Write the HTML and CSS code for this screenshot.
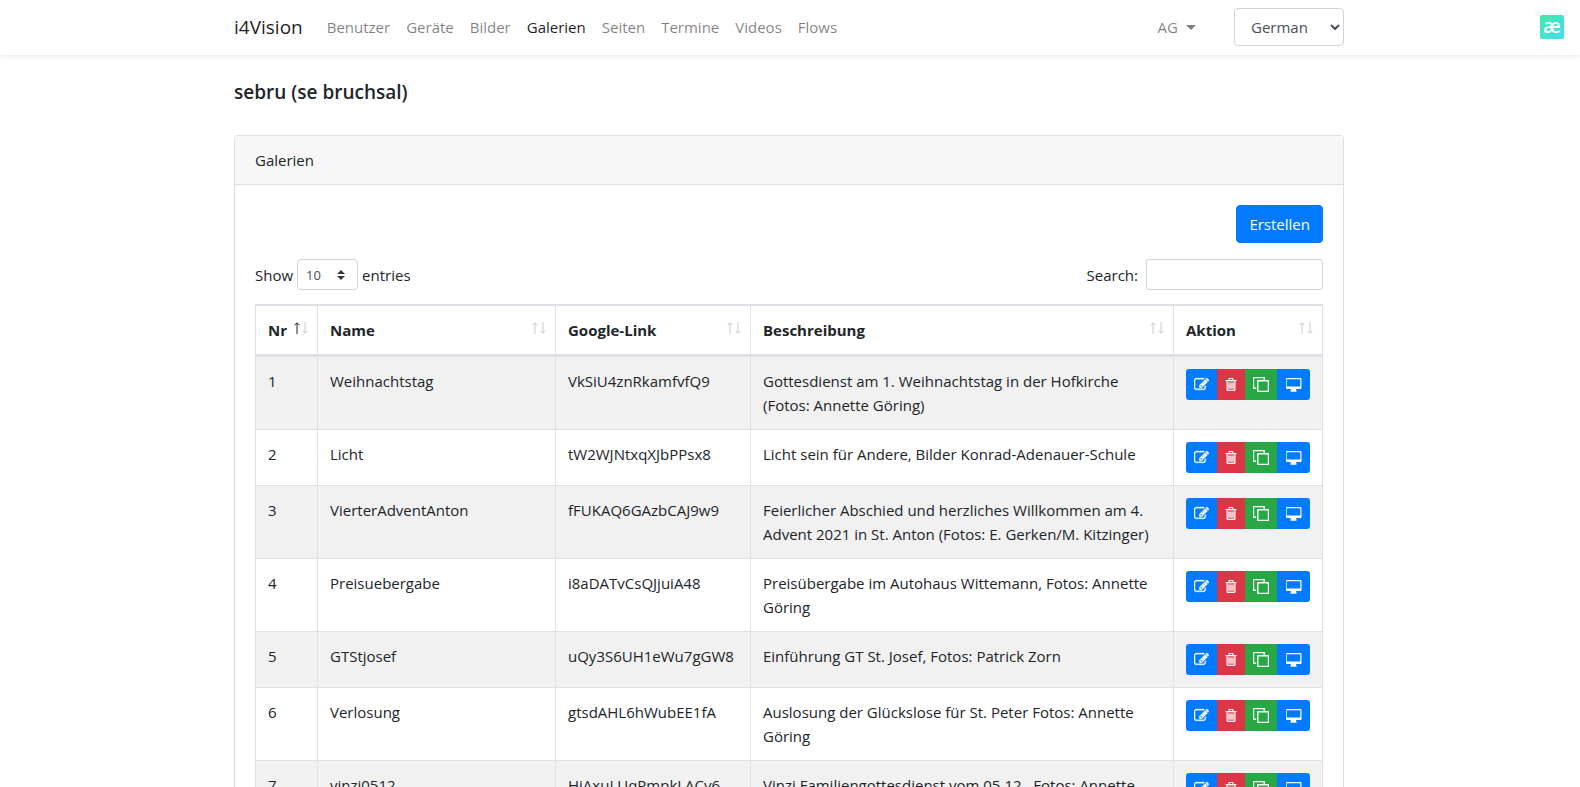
FILE: index.html
```html
<!DOCTYPE html>
<html lang="de">
<head>
<meta charset="utf-8">
<meta name="viewport" content="width=device-width, initial-scale=1">
<title>i4Vision – Galerien</title>
<link rel="stylesheet" href="styles.css">
</head>
<body>
<svg class="sprite" aria-hidden="true">
  <symbol id="edit" viewBox="0 0 1792 1792"><path stroke="currentColor" stroke-width="40" d="M888 1184l116-116-152-152-116 116v56h96v96h56zm440-720q-16-16-33 1l-350 350q-17 17-1 33t33-1l350-350q17-17 1-33zm80 594v190q0 119-84.500 203.500t-203.500 84.500h-832q-119 0-203.500-84.500t-84.500-203.500v-832q0-119 84.500-203.500t203.500-84.500h832q63 0 117 25 15 7 18 23 3 17-9 29l-49 49q-14 14-32 8-23-6-45-6h-832q-66 0-113 47t-47 113v832q0 66 47 113t113 47h832q66 0 113-47t47-113v-126q0-13 9-22l64-64q15-15 35-7t20 29zm-96-738l288 288-672 672h-288v-288zm444 132l-92 92-288-288 92-92q28-28 68-28t68 28l152 152q28 28 28 68t-28 68z"/></symbol>
  <symbol id="trash" viewBox="0 0 11 13"><path d="M1.500 3h8v9.500h-8z" fill-opacity=".35"/><path d="M0 2.500h11M3.500 2.500v-1.500q0-.5.5-.5h3q.5 0 .5.500v1.500M1.500 3v8.500q0 1 1 1h6q1 0 1-1v-8.500M3.500 5v5.500M5.500 5v5.500M7.500 5v5.500" fill="none" stroke="currentColor" stroke-width="1.100"/></symbol>
  <symbol id="clone" viewBox="0 0 15 14"><path d="M4.500 3.500h10v10h-10zM3 10.500h-2.500v-10h10v2.500" fill="none" stroke="currentColor" stroke-width="1.300" stroke-linejoin="round"/></symbol>
  <symbol id="desktop" viewBox="0 0 16 14"><path fill-rule="evenodd" d="M1.200 0h13.600q1.200 0 1.200 1.200v8.600q0 1.200-1.200 1.200h-4.300q0 .9.500 1.500v.8q0 .5-.5.500h-5q-.5 0-.5-.5v-.8q.5-.6.500-1.500h-3.800q-1.200 0-1.200-1.200v-8.600q0-1.200 1.200-1.200zM1.200 1.200v7.300h13.600v-7.300z"/></symbol>
  <symbol id="up" viewBox="0 0 6 12"><path d="M3 12v-11M.5 3.300l2.500-2.500 2.500 2.500" fill="none" stroke="currentColor"/></symbol>
  <symbol id="down" viewBox="0 0 6 12"><path d="M3 0v11M.5 8.700l2.500 2.500 2.500-2.500" fill="none" stroke="currentColor"/></symbol>
</svg>

<header class="navbar">
  <nav class="container navbar-inner">
    <a class="brand" href="#">i4Vision</a>
    <ul class="nav">
      <li><a href="#">Benutzer</a></li>
      <li><a href="#">Geräte</a></li>
      <li><a href="#">Bilder</a></li>
      <li><a class="active" href="#">Galerien</a></li>
      <li><a href="#">Seiten</a></li>
      <li><a href="#">Termine</a></li>
      <li><a href="#">Videos</a></li>
      <li><a href="#">Flows</a></li>
    </ul>
    <button class="dropdown" type="button">AG<span class="caret"></span></button>
    <select class="language" aria-label="Sprache"><option>German</option><option>English</option></select>
  </nav>
  <a class="badge" href="#" aria-label="ae">æ</a>
</header>

<main class="container">
  <h1 class="title">sebru (se bruchsal)</h1>
  <section class="card">
    <div class="card-header">Galerien</div>
    <div class="card-body">
      <div class="actions"><button class="create" type="button">Erstellen</button></div>
      <div class="filters">
        <label class="length" for="length">Show
          <span class="length-box">
            <select id="length"><option>10</option><option>25</option><option>50</option></select>
            <svg class="length-icon" viewBox="0 0 8 10" aria-hidden="true"><path d="M0 4l4-4 4 4zM0 6l4 4 4-4z"/></svg>
          </span>
          entries</label>
        <label class="search" for="search">Search:<input id="search" type="search"></label>
      </div>
      <table class="table">
        <colgroup><col class="col-nr"><col class="col-name"><col class="col-link"><col><col class="col-action"></colgroup>
        <thead>
          <tr>
            <th><div class="sort">Nr<span class="arrows asc"><svg><use href="#up"/></svg><svg><use href="#down"/></svg></span></div></th>
            <th><div class="sort">Name<span class="arrows"><svg><use href="#up"/></svg><svg><use href="#down"/></svg></span></div></th>
            <th><div class="sort">Google-Link<span class="arrows"><svg><use href="#up"/></svg><svg><use href="#down"/></svg></span></div></th>
            <th><div class="sort">Beschreibung<span class="arrows"><svg><use href="#up"/></svg><svg><use href="#down"/></svg></span></div></th>
            <th><div class="sort">Aktion<span class="arrows"><svg><use href="#up"/></svg><svg><use href="#down"/></svg></span></div></th>
          </tr>
        </thead>
        <tbody id="rows"></tbody>
      </table>
    </div>
  </section>
</main>
<script src="rows.js"></script>
</body>
</html>
```
FILE: rows.js
```js
const galleries = [
  ["Weihnachtstag", "VkSiU4znRkamfvfQ9", "Gottesdienst am 1. Weihnachtstag in der Hofkirche (Fotos: Annette Göring)"],
  ["Licht", "tW2WJNtxqXJbPPsx8", "Licht sein für Andere, Bilder Konrad-Adenauer-Schule"],
  ["VierterAdventAnton", "fFUKAQ6GAzbCAJ9w9", "Feierlicher Abschied und herzliches Willkommen am 4. Advent 2021 in St. Anton (Fotos: E. Gerken/M. Kitzinger)"],
  ["Preisuebergabe", "i8aDATvCsQJjuiA48", "Preisübergabe im Autohaus Wittemann, Fotos: Annette Göring"],
  ["GTStjosef", "uQy3S6UH1eWu7gGW8", "Einführung GT St. Josef, Fotos: Patrick Zorn"],
  ["Verlosung", "gtsdAHL6hWubEE1fA", "Auslosung der Glückslose für St. Peter Fotos: Annette Göring"],
  ["vinzi0512", "HjAxuLUqPmpkLACv6", "Vinzi Familiengottesdienst vom 05.12., Fotos: Annette Göring"]
];

const actions = [
  ["edit", "Bearbeiten"],
  ["trash", "Löschen"],
  ["clone", "Kopieren"],
  ["desktop", "Anzeigen"]
];

const buttons = actions
  .map(([icon, label]) => `<button type="button" class="btn btn-${icon}" aria-label="${label}"><svg><use href="#${icon}"/></svg></button>`)
  .join("");

document.getElementById("rows").innerHTML = galleries
  .map(([name, link, text], i) => `<tr><td>${i + 1}</td><td>${name}</td><td>${link}</td><td>${text}</td><td><div class="btn-group">${buttons}</div></td></tr>`)
  .join("");
```
FILE: styles.css
```css
*, *::before, *::after { box-sizing: border-box; }

body {
  margin: 0;
  font: 15px/24px "Open Sans", "Noto Sans", sans-serif;
  color: #212529;
  background: #fff;
}

button, select, input { font: inherit; }
a { text-decoration: none; color: inherit; }
.sprite { position: absolute; width: 0; height: 0; }

.container {
  width: 100%;
  max-width: 1140px;
  margin: 0 auto;
  padding: 0 16px 0 14px;
}

.navbar {
  position: relative;
  padding-bottom: 1px;
  background: #fff;
  box-shadow: 0 2px 4px rgba(0, 0, 0, .075);
}

.navbar-inner {
  display: flex;
  align-items: center;
  min-height: 54px;
}

.brand { margin-right: 16px; font-size: 19px; color: rgba(0, 0, 0, .9); }

.nav {
  display: flex;
  flex: 1;
  margin: 0;
  padding: 0;
  list-style: none;
}

.nav a { display: block; padding: 8px; color: rgba(0, 0, 0, .5); }
.nav .active { color: rgba(0, 0, 0, .9); }

.dropdown {
  display: flex;
  align-items: center;
  gap: 8px;
  margin-right: 30px;
  padding: 8px;
  border: 0;
  background: none;
  color: rgba(0, 0, 0, .5);
}

.caret { border: 5px solid transparent; border-top-color: currentColor; border-bottom: 0; }

.language {
  width: 110px;
  height: 38px;
  padding: 6px 0 6px 12px;
  border: 1px solid #ced4da;
  border-radius: 4px;
  background: #fff;
  color: #495057;
}

.badge {
  position: absolute;
  top: 15px;
  right: 16px;
  width: 24px;
  height: 24px;
  border-radius: 2px;
  background: linear-gradient(135deg, #43eaa0, #43dcf5);
  color: #fff;
  font-size: 20px;
  font-weight: 600;
  line-height: 21px;
  text-align: center;
}

.title { margin: 0; padding: 25px 0 31px; font-size: 19px; font-weight: 600; }

.card { border: 1px solid #dfdfdf; border-radius: 4px; }
.card-header { padding: 12px 20px; border-bottom: 1px solid #dfdfdf; background: #f7f7f7; }
.card-body { padding: 20px; }

.actions { display: flex; justify-content: flex-end; margin-bottom: 16px; }

.create {
  padding: 6px 12px;
  border: 1px solid #007bff;
  border-radius: 4px;
  background: #007bff;
  color: #fff;
}

.filters { display: flex; justify-content: space-between; margin-bottom: 14px; }
.length, .search { display: flex; align-items: center; }
.length { gap: 4px; }
.search { gap: 8px; }

.length-box { display: grid; align-items: center; }
.length-box > * { grid-area: 1 / 1; }

.length select {
  width: 61px;
  height: 31px;
  padding: 0 8px;
  appearance: none;
  border: 1px solid #ced4da;
  border-radius: 4px;
  background: #fff;
  color: #495057;
  font-size: 13px;
}

.length-icon { justify-self: end; width: 8px; height: 10px; margin-right: 13px; fill: #343a40; pointer-events: none; }

.search input {
  width: 177px;
  height: 31px;
  padding: 4px 8px;
  border: 1px solid #ced4da;
  border-radius: 3px;
}

.table {
  width: 100%;
  table-layout: fixed;
  border: 1px solid #dee2e6;
  border-collapse: separate;
  border-spacing: 0;
}

.col-nr { width: 62px; }
.col-name { width: 238px; }
.col-link { width: 195px; }
.col-action { width: 148px; }

.table th, .table td {
  padding: 12px;
  border: 0 solid #dee2e6;
  border-top-width: 1px;
  border-right-width: 1px;
  text-align: left;
  vertical-align: top;
}

.table th { border-bottom-width: 2px; padding-right: 9px; }
.table th:last-child, .table td:last-child { border-right-width: 0; }
.table tbody tr:nth-child(odd) { background: #f1f1f1; }

.sort { display: flex; justify-content: space-between; align-items: center; font-weight: 700; }
.arrows { display: flex; gap: 2px; padding-bottom: 4px; color: #c8c9ca; }
.arrows svg { width: 6px; height: 12px; }
.arrows.asc svg:first-child { color: #212529; }

.btn-group { display: flex; }

.btn {
  display: flex;
  align-items: center;
  justify-content: center;
  height: 31px;
  padding: 0;
  border: 0;
  color: #fff;
  fill: currentColor;
}

.btn-edit { width: 31px; border-radius: 3px 0 0 3px; background: #007bff; }
.btn-edit svg { width: 15px; height: 15px; }
.btn-trash { width: 28px; background: #dc3545; }
.btn-trash svg { width: 12px; height: 13px; }
.btn-clone { width: 32px; background: #28a745; }
.btn-clone svg { width: 16px; height: 15px; }
.btn-desktop { width: 33px; border-radius: 0 3px 3px 0; background: #007bff; }
.btn-desktop svg { width: 17px; height: 14px; }
```
